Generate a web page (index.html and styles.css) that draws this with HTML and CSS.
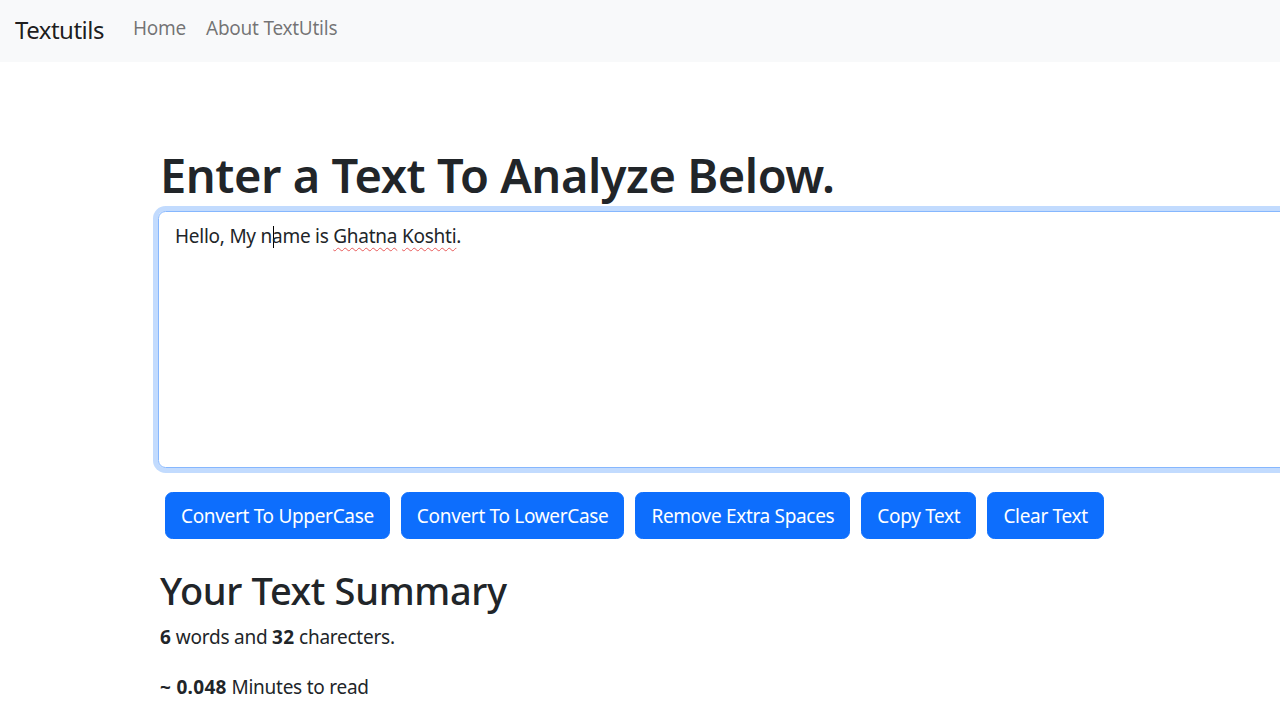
FILE: index.html
```html
<!DOCTYPE html>
<html lang="en">
<head>
<meta charset="utf-8">
<title>TextUtils</title>
<link rel="stylesheet" href="styles.css">
</head>
<body>
<nav class="navbar">
  <a class="brand" href="#">Textutils</a>
  <ul class="nav-links">
    <li><a href="#">Home</a></li>
    <li><a href="#">About TextUtils</a></li>
  </ul>
</nav>
<main class="container">
  <h1 class="title">Enter a Text To Analyze Below.</h1>
  <div class="textbox">Hello, My n<span class="caret"></span>ame is <span class="misspelled">Ghatna</span> <span class="misspelled">Koshti</span>.</div>
  <div class="actions">
    <button class="btn">Convert To UpperCase</button>
    <button class="btn">Convert To LowerCase</button>
    <button class="btn">Remove Extra Spaces</button>
    <button class="btn">Copy Text</button>
    <button class="btn">Clear Text</button>
  </div>
  <h2 class="subtitle">Your Text Summary</h2>
  <p class="stat"><b>6</b> words and <b>32</b> charecters.</p>
  <p class="stat"><b>~ 0.048</b> Minutes to read</p>
</main>
</body>
</html>
```

FILE: styles.css
```css
html, body {
  margin: 0;
  padding: 0;
  overflow: hidden;
}
body {
  font-family: "Noto Sans", "Open Sans", sans-serif;
  font-size: 19px;
  letter-spacing: -0.25px;
  line-height: 30px;
  color: #212529;
  background: #fff;
  width: 1280px;
  height: 720px;
}
.navbar {
  height: 62px;
  background: #f8f9fa;
  display: flex;
  align-items: center;
  padding: 0 15px;
  box-sizing: border-box;
}
.brand {
  font-size: 24px;
  letter-spacing: -0.5px;
  color: rgba(0,0,0,0.9);
  text-decoration: none;
  margin-right: 19px;
  margin-top: -3px;
}
.nav-links {
  list-style: none;
  display: flex;
  margin: 0;
  padding: 0;
}
.nav-links a {
  display: block;
  padding: 0 10px;
  color: rgba(0,0,0,0.55);
  text-decoration: none;
  margin-top: -6px;
}
.container {
  padding-left: 160px;
}
.title {
  font-size: 47px;
  letter-spacing: -0.45px;
  line-height: 60px;
  font-weight: 600;
  margin: 83px 0 6px;
}
.textbox {
  width: 1140px;
  height: 257px;
  box-sizing: border-box;
  margin-left: -2px;
  border: 1px solid #86b7fe;
  border-radius: 7.5px;
  box-shadow: 0 0 0 5px rgba(13,110,253,0.25);
  padding: 9px 15px 7px 16px;
}
.caret {
  display: inline-block;
  width: 1px;
  height: 22px;
  background: #000;
  vertical-align: -5px;
  margin-left: 1px;
  margin-right: -2px;
}
.misspelled {
  text-decoration: underline wavy #e85a5a;
  text-decoration-thickness: 1px;
  text-underline-offset: 4px;
}
.actions {
  display: flex;
  gap: 11px;
  margin: 24px 0 0 5px;
}
.btn {
  font-family: inherit;
  font-size: 19px;
  letter-spacing: -0.32px;
  line-height: 30px;
  color: #fff;
  background: #0d6efd;
  border: 1px solid #0d6efd;
  border-radius: 7.5px;
  padding: 7.5px 15px;
  cursor: pointer;
}
.subtitle {
  font-size: 38px;
  letter-spacing: -0.35px;
  line-height: 48px;
  font-weight: 500;
  margin: 27px 0 8px;
}
.stat {
  margin: 0 0 20px;
}
.stat b {
  font-weight: 700;
  letter-spacing: 0.3px;
}
```
